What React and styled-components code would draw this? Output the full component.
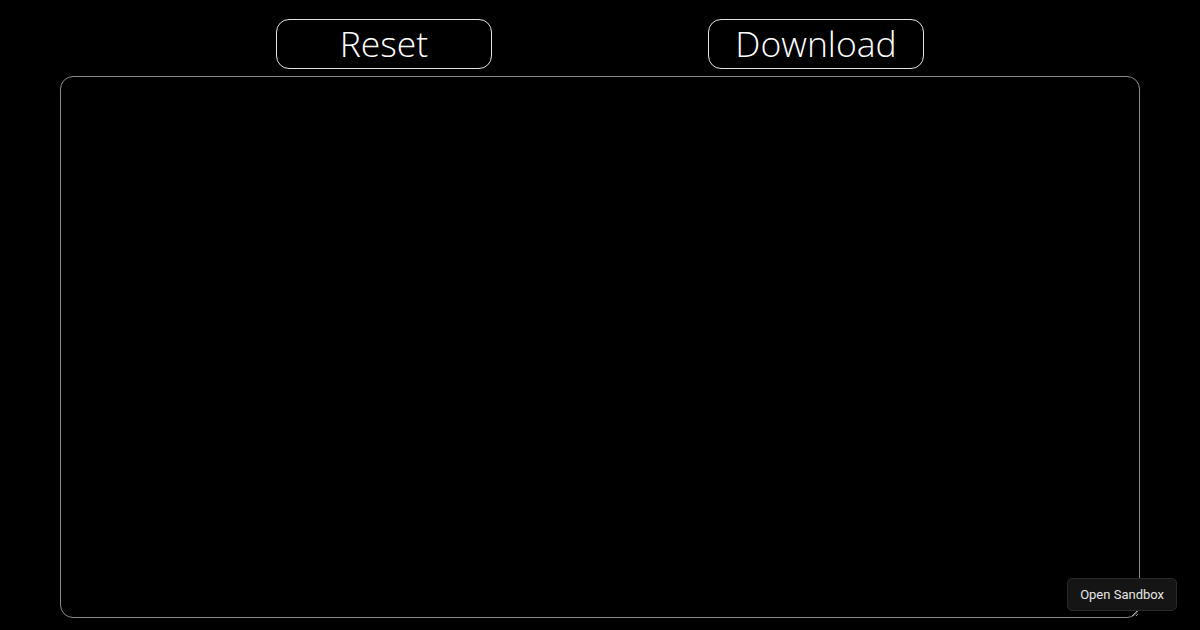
import React from 'react';
import styled, { createGlobalStyle } from 'styled-components';

const GlobalStyle = createGlobalStyle`
  html, body {
    margin: 0;
    padding: 0;
    background: #000;
    height: 100%;
  }
  body {
    font-family: "Open Sans", "DejaVu Sans", sans-serif;
    color: #fff;
  }
`;

const Page = styled.div`
  width: 1080px;
  margin: 0 auto;
  padding-top: 19px;
  display: flex;
  flex-direction: column;
  gap: 7px;
`;

const Toolbar = styled.div`
  display: flex;
  justify-content: space-evenly;
`;

const ToolButton = styled.button`
  width: 216px;
  height: 50px;
  box-sizing: border-box;
  background: #000;
  color: #fff;
  border: 1px solid #e0e0e0;
  border-radius: 13px;
  font-family: "Open Sans", "DejaVu Sans", sans-serif;
  font-weight: 300;
  font-size: 35.5px;
  line-height: 1;
  padding: 0 0 1px;
  cursor: pointer;
`;

const Board = styled.div`
  box-sizing: border-box;
  height: 542px;
  border: 1px solid #8a8a8a;
  border-radius: 13px;
  resize: both;
  overflow: hidden;
  background: #000;
`;

const SandboxButton = styled.button`
  position: fixed;
  right: 23px;
  bottom: 19px;
  height: 33px;
  padding: 0 12px;
  background: #151515;
  color: #e6e6e6;
  border: 1px solid #2a2a2a;
  border-radius: 5px;
  font-family: "Roboto", "Liberation Sans", sans-serif;
  font-size: 13px;
  cursor: pointer;
`;

const App = () => {
  return (
    <>
      <GlobalStyle />
      <Page>
        <Toolbar>
          <ToolButton>Reset</ToolButton>
          <ToolButton>Download</ToolButton>
        </Toolbar>
        <Board />
      </Page>
      <SandboxButton>Open Sandbox</SandboxButton>
    </>
  );
};

export default App;
